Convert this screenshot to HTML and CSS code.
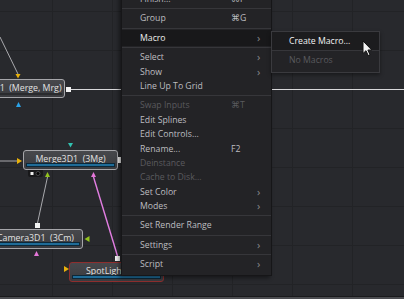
FILE: index.html
```html
<!DOCTYPE html>
<html lang="en">
<head>
  <meta charset="UTF-8" />
  <title>Flow</title>
  <link rel="stylesheet" href="styles.css">
</head>
<body>

  <div class="flow">
    <svg class="wires" width="404" height="299" viewBox="0 0 404 299">
      <!-- links -->
      <line x1="0" y1="37" x2="18" y2="74" stroke="#a9a9ad" stroke-width="1" />
      <line x1="0" y1="161" x2="17" y2="161" stroke="#a9a9ad" stroke-width="1" />
      <line x1="47.5" y1="177" x2="37.5" y2="223" stroke="#a9a9ad" stroke-width="1" />
      <line x1="93.5" y1="177" x2="117.5" y2="256" stroke="#e27ee2" stroke-width="1.4" />
      <line x1="71" y1="89.5" x2="404" y2="89.5" stroke="#d8d8da" stroke-width="1.2" />

      <!-- inputs -->
      <polygon points="15.5,74 20.5,74 18,78.5" fill="#e8b10a" />
      <polygon points="16,107 21,107 18.5,102" fill="#2aa2e8" />
      <polygon points="17,158 17,164 22,161" fill="#e8b10a" />
      <polygon points="68,143 73,143 70.5,147.5" fill="#31c2b0" />
      <polygon points="45,177 50,177 47.5,172" fill="#92c21e" />
      <polygon points="91,177 96,177 93.5,172" fill="#e476d8" />
      <polygon points="89.5,236 89.5,242 84.5,239" fill="#92c21e" />
      <polygon points="34,256 39,256 36.5,251" fill="#e476d8" />
      <polygon points="64,266 64,272 69,269" fill="#e8b10a" />

      <!-- outputs -->
      <rect x="66" y="87" width="5" height="5" fill="#f2f2f2" />
      <rect x="118" y="157" width="4" height="6" fill="#f2f2f2" />
      <rect x="35" y="223" width="5" height="5" fill="#f2f2f2" />
      <rect x="115" y="256" width="5" height="5" fill="#f2f2f2" />

      <!-- view tab under merge3d -->
      <path d="M28 170 H43 V175 Q43 177 41 177 H30 Q28 177 28 175 Z" fill="#18181a" />
      <rect x="30.5" y="172" width="3" height="3" fill="#eeeeee" />
      <circle cx="38" cy="173.5" r="2" fill="#050505" stroke="#6a6a6e" stroke-width="0.6" />
    </svg>

    <div class="node node-merge">
      <span class="node-label">Merge1&nbsp;&nbsp;(Merge, Mrg)</span>
      <span class="node-bar plain"></span>
    </div>
    <div class="node node-merge3d">
      <span class="node-label">Merge3D1&nbsp;&nbsp;(3Mg)</span>
      <span class="node-bar"></span>
    </div>
    <div class="node node-camera">
      <span class="node-label">Camera3D1&nbsp;&nbsp;(3Cm)</span>
      <span class="node-bar"></span>
    </div>
    <div class="node node-spot">
      <span class="node-label left">SpotLight</span>
      <span class="node-bar"></span>
    </div>

    <div class="menu">
      <div class="item"><span class="label">Finish...</span><span class="key">⌘F</span><span class="arrow"></span></div>
      <div class="sep"></div>
      <div class="item"><span class="label">Group</span><span class="key">⌘G</span><span class="arrow"></span></div>
      <div class="sep"></div>
      <div class="item active"><span class="label">Macro</span><span class="key"></span><span class="arrow">›</span></div>
      <div class="sep"></div>
      <div class="item"><span class="label">Select</span><span class="key"></span><span class="arrow">›</span></div>
      <div class="item"><span class="label">Show</span><span class="key"></span><span class="arrow">›</span></div>
      <div class="item"><span class="label">Line Up To Grid</span><span class="key"></span><span class="arrow"></span></div>
      <div class="sep"></div>
      <div class="item off"><span class="label">Swap Inputs</span><span class="key">⌘T</span><span class="arrow"></span></div>
      <div class="item"><span class="label">Edit Splines</span><span class="key"></span><span class="arrow"></span></div>
      <div class="item"><span class="label">Edit Controls...</span><span class="key"></span><span class="arrow"></span></div>
      <div class="item"><span class="label">Rename...</span><span class="key">F2</span><span class="arrow"></span></div>
      <div class="item off"><span class="label">Deinstance</span><span class="key"></span><span class="arrow"></span></div>
      <div class="item off"><span class="label">Cache to Disk...</span><span class="key"></span><span class="arrow"></span></div>
      <div class="item"><span class="label">Set Color</span><span class="key"></span><span class="arrow">›</span></div>
      <div class="item"><span class="label">Modes</span><span class="key"></span><span class="arrow">›</span></div>
      <div class="sep"></div>
      <div class="item"><span class="label">Set Render Range</span><span class="key"></span><span class="arrow"></span></div>
      <div class="sep"></div>
      <div class="item"><span class="label">Settings</span><span class="key"></span><span class="arrow">›</span></div>
      <div class="sep"></div>
      <div class="item"><span class="label">Script</span><span class="key"></span><span class="arrow">›</span></div>
    </div>

    <div class="submenu">
      <div class="sub-item active">Create Macro...</div>
      <div class="sep"></div>
      <div class="sub-item off">No Macros</div>
    </div>

    <svg class="pointer" width="12" height="17" viewBox="0 0 12 17">
      <path d="M1 1 V13.5 L4 10.7 L6.2 15.6 L8 14.8 L5.9 10 H9.8 Z" fill="#f4f4f4" stroke="#111" stroke-width="1" stroke-linejoin="round" />
    </svg>

    <div class="panel-edge"></div>
  </div>

</body>
</html>
```

FILE: styles.css
```css
body {
  margin: 0;
  padding: 0;
  background-color: #28292d;
  font-family: "Open Sans", "Liberation Sans", sans-serif;
  overflow: hidden;
}

.flow {
  position: relative;
  width: 404px;
  height: 299px;
  overflow: hidden;
  background-color: #28292d;
  background-image:
    linear-gradient(to right, #222326 1px, transparent 1px),
    linear-gradient(to bottom, #222326 1px, transparent 1px);
  background-size: 60px 100%, 100% 39px;
  background-position: 52px 0, 0 11px;
}

.wires {
  position: absolute;
  left: 0;
  top: 0;
}

/* nodes */
.node {
  position: absolute;
  height: 20px;
  box-sizing: border-box;
  border: 1px solid #a6a6aa;
  border-radius: 3px;
  background: linear-gradient(#47484c, #3a3b3f);
  color: #e2e2e2;
  font-size: 8.8px;
}
.node-label {
  display: block;
  text-align: center;
  line-height: 16px;
  white-space: nowrap;
}
.node-label.left {
  text-align: left;
  padding-left: 16px;
}
.node-bar {
  position: absolute;
  left: 2px;
  right: 2px;
  bottom: 2px;
  height: 2px;
  background: #1f6c98;
  border: 1px solid #0d2838;
}
.node-bar.plain {
  background: #5a5b5f;
  border-color: #2a2b2e;
  height: 0;
}

.node-merge { left: -30px; top: 79px; width: 95px; height: 19px; }
.node-merge3d { left: 23px; top: 150px; width: 95px; }
.node-camera { left: -12px; top: 229px; width: 95px; }
.node-spot {
  left: 69px;
  top: 262px;
  width: 95px;
  border-color: #8e2e2e;
}

/* context menu */
.menu {
  position: absolute;
  left: 121px;
  top: -9px;
  width: 151px;
  padding-bottom: 3px;
  background: #232326;
  border: 1px solid #161618;
  box-sizing: border-box;
  box-shadow: -2px 2px 4px rgba(0,0,0,0.45);
  font-size: 8.7px;
  color: #bdbdc0;
}
.item {
  display: flex;
  height: 14.4px;
  line-height: 14.4px;
  padding: 0 7px 0 18px;
  white-space: nowrap;
}
.item .label {
  flex: 1;
}
.item .key {
  width: 26px;
}
.item .arrow {
  width: 7px;
  color: #8a8a8e;
  font-size: 11px;
}
.item.off {
  color: #5a5a5e;
}
.item.active {
  background: #18181a;
  color: #ececec;
  margin: -1px 0;
  height: 16.4px;
  line-height: 16.4px;
}
.sep {
  height: 1px;
  margin: 2px 0;
  background: #36363a;
}

.submenu {
  position: absolute;
  left: 271px;
  top: 31px;
  width: 109px;
  padding-bottom: 3px;
  background: #232326;
  border: 1px solid #3a3a3e;
  box-sizing: border-box;
  box-shadow: 0 2px 4px rgba(0,0,0,0.4);
  font-size: 8.7px;
  color: #bdbdc0;
}
.sub-item {
  height: 18px;
  line-height: 18px;
  padding-left: 17px;
  white-space: nowrap;
}
.sub-item.active {
  background: #1c1c1e;
  color: #f2f2f2;
}
.sub-item.off {
  color: #5a5a5e;
}
.submenu .sep {
  margin: 0;
}

.pointer {
  position: absolute;
  left: 362px;
  top: 40px;
}

.panel-edge {
  position: absolute;
  left: 0;
  right: 0;
  bottom: 0;
  height: 2px;
  background: #4c4d51;
  border-top: 1px solid #1a1a1c;
}
```
